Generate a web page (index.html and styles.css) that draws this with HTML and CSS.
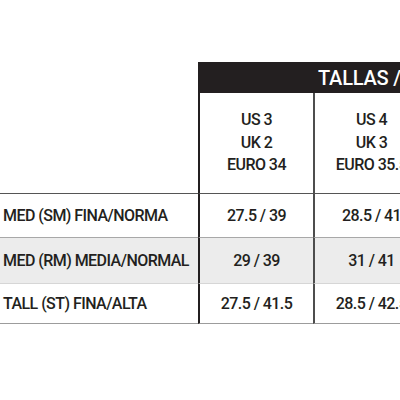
FILE: index.html
```html
<!DOCTYPE html>
<html lang="es">
<head>
<meta charset="utf-8">
<title>Tallas</title>
<link rel="stylesheet" href="styles.css">
</head>
<body>
<table class="chart">
  <colgroup>
    <col class="c-fit">
    <col class="c-size">
    <col class="c-size">
  </colgroup>
  <tr class="head">
    <th class="blank"></th>
    <th class="tallas" colspan="2">TALLAS / SIZES</th>
  </tr>
  <tr class="sizes">
    <th class="blank"></th>
    <th class="size first">US 3<br>UK 2<br>EURO 34</th>
    <th class="size">US 4<br>UK 3<br>EURO 35.5</th>
  </tr>
  <tr class="row">
    <th class="fit">MED (SM) FINA/NORMA</th>
    <td class="val first">27.5 / 39</td>
    <td class="val">28.5 / 41</td>
  </tr>
  <tr class="row alt">
    <th class="fit">MED (RM) MEDIA/NORMAL</th>
    <td class="val first">29 / 39</td>
    <td class="val">31 / 41</td>
  </tr>
  <tr class="row last">
    <th class="fit">TALL (ST) FINA/ALTA</th>
    <td class="val first">27.5 / 41.5</td>
    <td class="val">28.5 / 42.5</td>
  </tr>
</table>
</body>
</html>
```
FILE: styles.css
```css
html, body {
  margin: 0;
  padding: 0;
  background: #ffffff;
  overflow: hidden;
  width: 400px;
  height: 400px;
}

.chart {
  margin-top: 62px;
  border-collapse: separate;
  border-spacing: 0;
  table-layout: fixed;
  width: 428px;
  font-family: Roboto, "Liberation Sans", sans-serif;
  font-size: 16px;
  font-weight: 500;
  letter-spacing: -0.55px;
  color: #231f20;
}

.c-fit { width: 198px; }
.c-size { width: 115px; }

.chart th, .chart td {
  padding: 0;
  font-weight: 500;
  box-sizing: border-box;
  white-space: nowrap;
  overflow: hidden;
}

.head th { height: 31px; }

.tallas {
  background: #231f20;
  color: #ffffff;
  font-size: 20px;
  letter-spacing: -0.2px;
  text-align: left;
  padding-left: 120px !important;
}

.sizes th {
  height: 101px;
  border-bottom: 1px solid #555555;
  line-height: 22.5px;
  text-align: center;
}

.first { border-left: 2px solid #231f20; }
.size:not(.first), .val:not(.first) { border-left: 2px solid #4d4d4d; }

.row .fit {
  text-align: left;
  padding-left: 3px;
}

.row th, .row td {
  height: 44px;
  border-bottom: 1px solid #a8a8a8;
  text-align: center;
}

.row.alt th, .row.alt td {
  height: 46px;
  background: #ececec;
  border-bottom-color: #d6d6d6;
}

.row.last th, .row.last td {
  height: 40px;
  border-bottom: 1px solid #9c9c9c;
}
```
